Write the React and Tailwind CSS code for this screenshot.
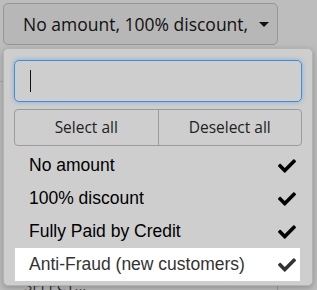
import React from "react";
import { FaCheck } from "react-icons/fa";

export default function App() {
  const items = [
    { label: "No amount", hi: false },
    { label: "100% discount", hi: false },
    { label: "Fully Paid by Credit", hi: false },
    { label: "Anti-Fraud (new customers)", hi: true },
  ];
  return (
    <div className="relative w-[317px] h-[290px] overflow-hidden bg-[#bdbdbd]">
      <div className="pt-[3px] pl-[3px]">
        <div className="w-[275px] h-[42px] rounded-[5px] border border-[#969696] bg-[#b7b7b7] flex items-center pl-[19px] text-[#111] text-[17.5px] [font-family:'Open_Sans',sans-serif]">
          <span>No amount, 100% discount,</span>
          <span className="ml-[11px] w-0 h-0 border-l-[5px] border-r-[5px] border-t-[5px] border-l-transparent border-r-transparent border-t-[#111]"></span>
        </div>
      </div>
      <div className="h-px bg-[#a8a8a8] w-[4px] mt-[36px]"></div>
      <div className="mt-[160px] ml-[20px] w-[258px] h-[60px] border-r border-[#9a9a9a] flex items-start pt-[32px] pl-[4px] text-[#333] text-[15px] [font-family:'Open_Sans',sans-serif]">
        <span>SELECT...</span>
        <span className="ml-auto mr-[15px] mt-[6px] w-0 h-0 border-l-[4px] border-r-[4px] border-t-[4px] border-l-transparent border-r-transparent border-t-[#333]"></span>
      </div>

      <div className="absolute left-[3px] top-[48px] w-[310px] h-[238px] rounded-[5px] border border-[#b3b3b3] bg-[#cecece] shadow-[0_2px_6px_rgba(0,0,0,0.25)] px-[10px] pt-[11px]">
        <div className="h-[42px] rounded-[5px] border border-[#3d8fd6] bg-[#cecece] shadow-[0_0_5px_rgba(80,150,220,0.6)] flex items-center pl-[15px]">
          <div className="w-px h-[22px] bg-[#111]"></div>
        </div>
        <div className="mt-[7px] h-[37px] flex rounded-[4px] border border-[#9b9b9b] text-[#222] text-[15.5px] [font-family:'Open_Sans',sans-serif]">
          <div className="flex-1 flex items-center justify-center border-r border-[#9b9b9b]">Select all</div>
          <div className="flex-1 flex items-center justify-center">Deselect all</div>
        </div>
        <div className="mt-[3px] [font-family:'Liberation_Sans',Arial,sans-serif] text-[17.5px]">
          {items.map((it) => (
            <div
              key={it.label}
              className={
                "h-[33px] flex items-center pl-[14px] pr-[4px] ml-[1px] mr-[2px] " +
                (it.hi ? "bg-white text-[#333]" : "text-[#000]")
              }
            >
              <span>{it.label}</span>
              <span className={"ml-auto " + (it.hi ? "text-[#333]" : "text-black")}>
                <FaCheck size={18} />
              </span>
            </div>
          ))}
        </div>
      </div>
    </div>
  );
}
